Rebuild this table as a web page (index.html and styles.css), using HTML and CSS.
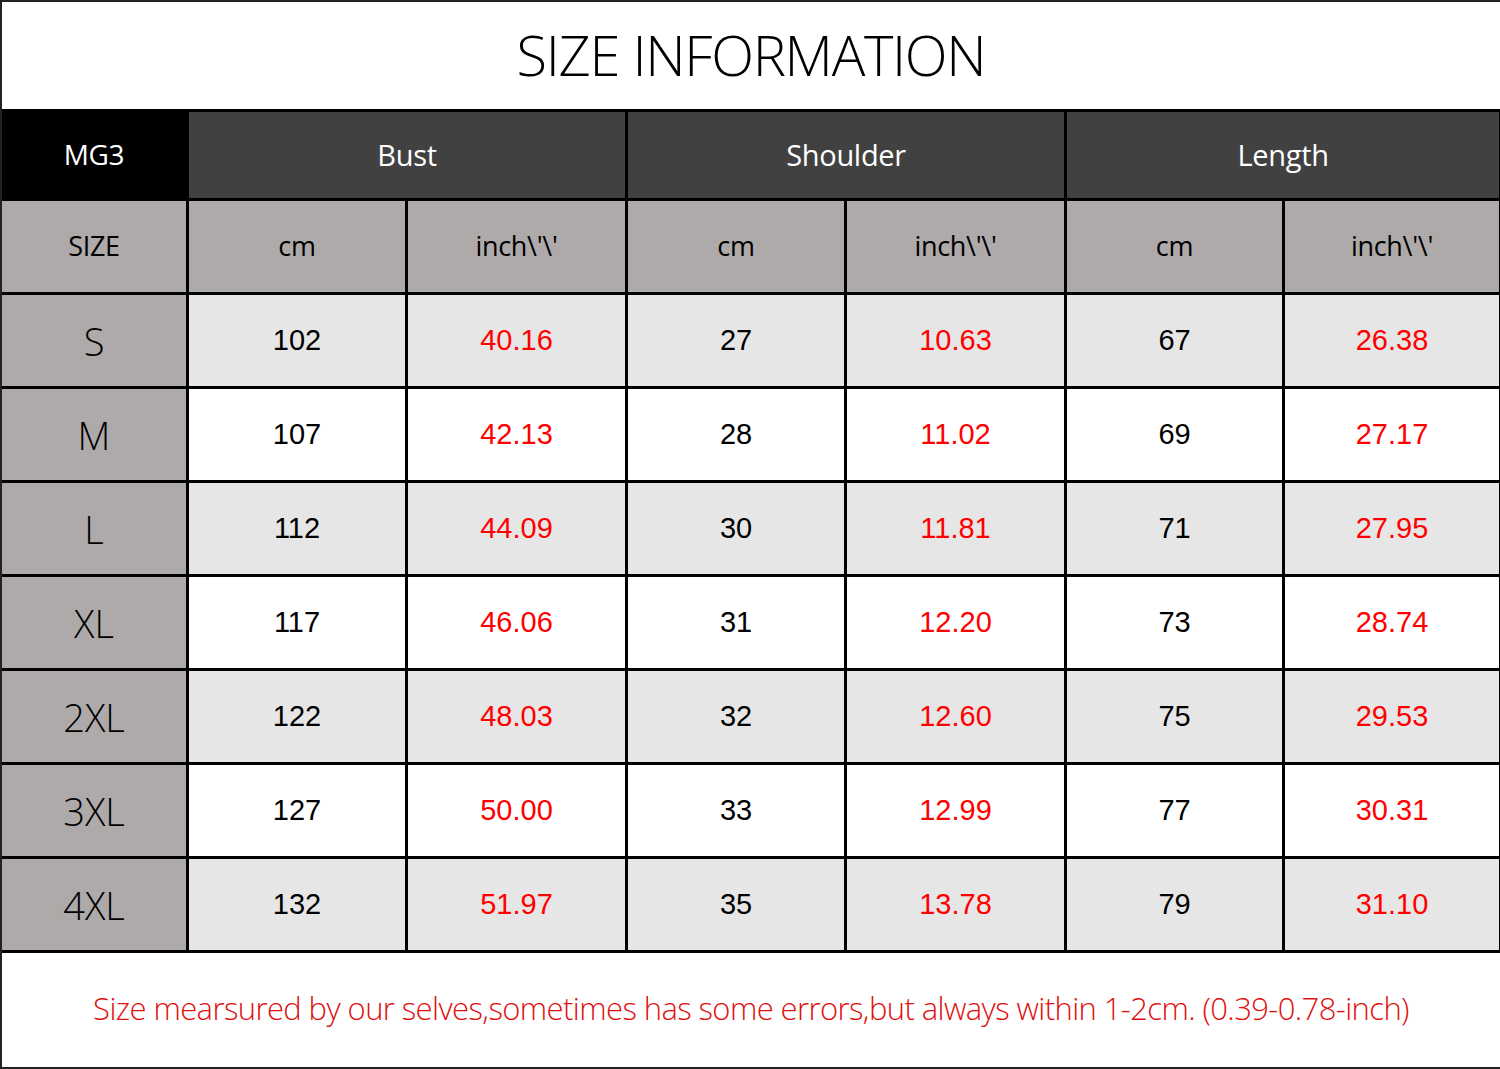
FILE: index.html
```html
<!DOCTYPE html>
<html>
<head>
<meta charset="utf-8">
<link rel="stylesheet" href="styles.css">
</head>
<body>
<div class="sheet">
  <div class="title">SIZE INFORMATION</div>
  <table class="grid">
    <colgroup>
      <col class="w187"><col class="w219"><col class="w220"><col class="w219"><col class="w220"><col class="w218"><col class="w217">
    </colgroup>
    <tr class="head">
      <th class="model">MG3</th>
      <th colspan="2">Bust</th>
      <th colspan="2">Shoulder</th>
      <th colspan="2">Length</th>
    </tr>
    <tr class="sub">
      <th>SIZE</th>
      <th>cm</th><th>inch\'\'</th>
      <th>cm</th><th>inch\'\'</th>
      <th>cm</th><th>inch\'\'</th>
    </tr>
    <tr class="row alt"><th>S</th><td>102</td><td class="in">40.16</td><td>27</td><td class="in">10.63</td><td>67</td><td class="in">26.38</td></tr>
    <tr class="row"><th>M</th><td>107</td><td class="in">42.13</td><td>28</td><td class="in">11.02</td><td>69</td><td class="in">27.17</td></tr>
    <tr class="row alt"><th>L</th><td>112</td><td class="in">44.09</td><td>30</td><td class="in">11.81</td><td>71</td><td class="in">27.95</td></tr>
    <tr class="row"><th>XL</th><td>117</td><td class="in">46.06</td><td>31</td><td class="in">12.20</td><td>73</td><td class="in">28.74</td></tr>
    <tr class="row alt"><th>2XL</th><td>122</td><td class="in">48.03</td><td>32</td><td class="in">12.60</td><td>75</td><td class="in">29.53</td></tr>
    <tr class="row"><th>3XL</th><td>127</td><td class="in">50.00</td><td>33</td><td class="in">12.99</td><td>77</td><td class="in">30.31</td></tr>
    <tr class="row alt"><th>4XL</th><td>132</td><td class="in">51.97</td><td>35</td><td class="in">13.78</td><td>79</td><td class="in">31.10</td></tr>
  </table>
  <div class="note">Size mearsured by our selves,sometimes has some errors,but always within 1-2cm. (0.39-0.78-inch)</div>
</div>
</body>
</html>
```

FILE: styles.css
```css
html, body {
  margin: 0;
  padding: 0;
  background: #fff;
}
.sheet {
  width: 1500px;
  height: 1069px;
  box-sizing: border-box;
  border: 2px solid #222;
  border-right: none;
  display: flex;
  flex-direction: column;
  overflow: hidden;
  font-family: "Open Sans", "Liberation Sans", sans-serif;
}
.title {
  height: 107px;
  flex: none;
  display: flex;
  align-items: center;
  justify-content: center;
  font-size: 56px;
  font-weight: 300;
  color: #000;
  letter-spacing: -1.3px;
  padding-bottom: 4px;
  box-sizing: border-box;
}
.grid {
  width: 1500px;
  border-collapse: collapse;
  table-layout: fixed;
  flex: none;
  margin-left: -3px;
}
.w187 { width: 187px; }
.w217 { width: 217px; }
.w218 { width: 218px; }
.w219 { width: 219px; }
.w220 { width: 220px; }
.grid th, .grid td {
  border: 3px solid #000;
  text-align: center;
  vertical-align: middle;
  padding: 0;
}
.grid th {
  font-family: "Open Sans", "Liberation Sans", sans-serif;
  font-weight: 400;
}
.head th {
  height: 84px;
  background: #414141;
  color: #fff;
  font-size: 29px;
  letter-spacing: -0.3px;
  padding-bottom: 2px;
}
.head th.model {
  background: #000;
  font-size: 28px;
}
.sub th {
  height: 89px;
  background: #aeaaaa;
  color: #000;
  font-size: 27px;
  letter-spacing: -0.3px;
  padding-bottom: 2px;
}
.row th {
  height: 91px;
  background: #aeaaaa;
  color: #000;
  font-size: 38px;
  font-weight: 300;
}
.row td {
  background: #fff;
  font-family: "Liberation Sans", Arial, sans-serif;
  font-size: 29px;
  color: #000;
}
.row.alt td {
  background: #e7e6e6;
}
.row td.in {
  color: #ff0000;
}
.note {
  flex: 1;
  display: flex;
  align-items: center;
  justify-content: center;
  color: #e01010;
  font-size: 31px;
  font-weight: 300;
  letter-spacing: -0.6px;
  padding-bottom: 4px;
}
```
